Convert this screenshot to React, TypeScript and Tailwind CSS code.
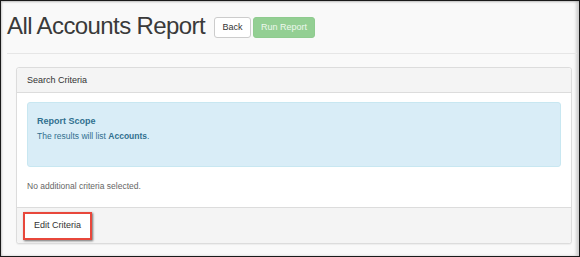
import React from 'react';

export default function App() {
  return (
    <div className="w-[580px] h-[257px] overflow-hidden border border-[#1a1a1a] bg-[#f9f9f9] shadow-[inset_1px_1px_2px_rgba(0,0,0,0.18),inset_-3px_0_3px_rgba(0,0,0,0.16)] font-['Liberation_Sans',Arial,sans-serif] text-[#333]">
      {/* Page header */}
      <div className="flex items-start pl-[6px] pt-[12px]">
        <h1 className="text-[24px] leading-[26px] tracking-[-0.6px] text-[#3a3a3a] font-normal">All Accounts Report</h1>
        <button className="ml-[9px] mt-[4px] h-[21px] w-[37px] rounded-[3px] border border-[#ccc] bg-white text-[9px] text-[#333]">
          Back
        </button>
        <button className="ml-[2px] mt-[4px] h-[21px] w-[62px] rounded-[3px] border border-[#8fcb8f] bg-[#93cf93] text-[9px] text-[#eef8ee]">
          Run Report
        </button>
      </div>
      <div className="ml-[6px] mr-[2px] mt-[14px] border-t border-[#e6e6e6]" />

      {/* Search criteria panel */}
      <div className="ml-[15px] mt-[13px] w-[556px] rounded-[3px] border border-[#dcdcdc] bg-white shadow-[0_1px_1px_rgba(0,0,0,0.05)]">
        <div className="h-[25px] border-b border-[#dcdcdc] bg-[#f4f4f4] pl-[10px] text-[9px] leading-[25px] rounded-t-[3px]">
          Search Criteria
        </div>
        <div className="px-[10px] pt-[9px] h-[114px]">
          <div className="h-[65px] rounded-[3px] border border-[#c8e7f1] bg-[#d9edf7] pl-[9px] pt-[12px] text-[#31708f]">
            <div className="text-[9px] font-bold leading-[12px]">Report Scope</div>
            <div className="mt-[3px] text-[8.5px] leading-[12px]">
              The results will list <span className="font-bold">Accounts</span>.
            </div>
          </div>
          <p className="mt-[13px] text-[8.5px] leading-[12px] text-[#666]">No additional criteria selected.</p>
        </div>
        <div className="border-t border-[#dcdcdc] bg-[#f4f4f4] py-[3px] pl-[6px] rounded-b-[3px]">
          <div className="inline-block border-2 border-[#e8473b] shadow-[1px_1px_2px_rgba(0,0,0,0.55)]">
            <button className="block h-[24px] w-[65px] bg-white text-[9px] text-[#333]">Edit Criteria</button>
          </div>
        </div>
      </div>
    </div>
  );
}
